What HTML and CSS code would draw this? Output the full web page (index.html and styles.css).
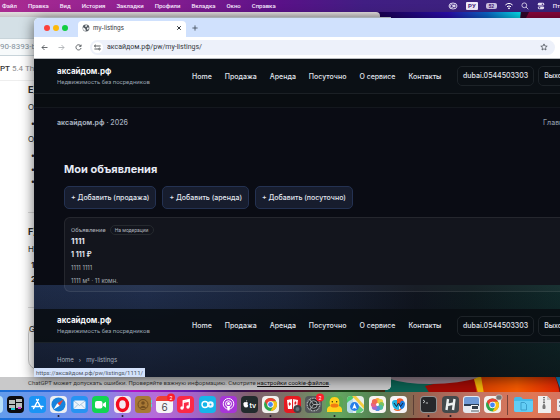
FILE: index.html
```html
<!DOCTYPE html>
<html lang="ru">
<head>
<meta charset="utf-8">
<title>my-listings</title>
<link rel="stylesheet" href="styles.css">
</head>
<body>
<div class="desktop">
  <svg class="wallpaper" viewBox="0 0 560 420" preserveAspectRatio="none" aria-hidden="true">
    <defs>
      <linearGradient id="sky"><stop offset=".66" stop-color="#180048"/><stop offset=".8" stop-color="#2a0cae"/><stop offset=".87" stop-color="#0a66c8"/><stop offset=".93" stop-color="#04e4f0"/></linearGradient>
      <linearGradient id="floor"><stop offset="0" stop-color="#1a70d8"/><stop offset=".17" stop-color="#3a62dc"/><stop offset=".24" stop-color="#b812c8"/><stop offset=".35" stop-color="#5c18b0"/><stop offset=".42" stop-color="#30104e"/><stop offset=".52" stop-color="#5c0c30"/><stop offset=".62" stop-color="#174618"/><stop offset=".74" stop-color="#58140e"/><stop offset=".86" stop-color="#a81408"/><stop offset="1" stop-color="#641812"/></linearGradient>
      <linearGradient id="fire"><stop offset="0" stop-color="#d43c00"/><stop offset=".5" stop-color="#f65a00"/><stop offset="1" stop-color="#e02404"/></linearGradient>
    </defs>
    <rect width="560" height="210" fill="url(#sky)"/>
    <path d="M522 0H560V40H518Z" fill="#30052c"/><path d="M535 0H560V22H524Z" fill="#88063c"/>
    <rect y="210" width="560" height="210" fill="url(#floor)"/>
    <path d="M385 370H490L470 400H385Z" fill="#0b6253"/>
    <path d="M425 386Q460 378 482 376L478 410H440Z" fill="#a20b05"/>
    <path d="M390 360H508Q490 383 430 384Q405 384 390 379Z" fill="#96838f"/>
    <path d="M474 379L508 370H552Q560 385 560 400H478Z" fill="url(#fire)"/>
    <path d="M474 379L481 376L485 400H480Z" fill="#efb508"/>
    <path d="M553 370H560V388Z" fill="#0b86c2"/>
  </svg>

  <nav class="menubar" aria-label="Меню">
    <div class="menus"><span>Файл</span><span>Правка</span><span>Вид</span><span>История</span><span>Закладки</span><span>Профили</span><span>Вкладка</span><span>Окно</span><span>Справка</span></div>
    <div class="status">
      <svg width="10" height="8" viewBox="0 0 10 8"><ellipse cx="5" cy="4" rx="4" ry="3" fill="none" stroke="#ddd6ef"/><circle cx="3.6" cy="4.2" r="1.5" fill="none" stroke="#ddd6ef"/><circle cx="6.2" cy="4" r="1.4" fill="#ddd6ef"/></svg>
      <span class="lang">РУ</span>
      <span class="battery">52</span>
      <svg width="8" height="8" viewBox="0 0 8 8" fill="none" stroke="#fff"><path d="M.4 3Q4-.2 7.6 3M2 4.7Q4 3.2 6 4.7"/><circle cx="4" cy="6.3" r=".5" fill="#fff"/></svg>
      <svg width="8" height="8" viewBox="0 0 8 8" fill="none" stroke="#e8e2f4" stroke-width=".8"><circle cx="3.3" cy="3.3" r="2.4"/><path d="M5 5L7.3 7.3"/></svg>
      <svg width="8" height="8" viewBox="0 0 8 8" fill="#e8e2f4"><rect x=".8" y=".8" width="6.4" height="2.8" rx="1.4"/><rect x=".8" y="4.4" width="6.4" height="2.8" rx="1.4"/><circle cx="5.5" cy="2.2" r=".8" fill="#412681"/><circle cx="2.5" cy="5.8" r=".8" fill="#412681"/></svg>
      <span>Пт</span>
    </div>
  </nav>

  <div class="strip"></div>
  <section class="chat">
    <div class="chat-tabs"></div>
    <div class="chat-url">90-8393-b1</div>
    <div class="chat-model"><b>PT</b>&nbsp;5.4 Thi</div>
    <div class="chat-body">
      <h2>Е)</h2><p>От</p><p class="dot">•</p><p>Од</p><p class="dot">•</p><p class="dot tight">•</p><p class="dot tight">•</p>
      <hr>
      <h2>F)</h2><p>Ну</p><p class="num">1.</p><p class="num tight">2.</p>
      <hr class="second">
      <div class="composer">G</div>
    </div>
    <p class="notice">ChatGPT может допускать ошибки. Проверяйте важную информацию. Смотрите <a href="#cookies">настройки cookie-файлов</a>.</p>
  </section>

  <main class="browser">
    <div class="tabstrip">
      <div class="lights"><i class="red"></i><i class="yellow"></i><i class="green"></i></div>
      <div class="tab">
        <svg width="8" height="8" viewBox="0 0 8 8"><circle cx="4" cy="4" r="3.4" fill="#555c63"/><path d="M1.2 3.2L3 4.4L4 6.6L2.8 7L1 5.2ZM3.6 1L5.4 1.4L4.6 2.8L3.2 3ZM5.4 3.6L7 3.7L6 6L4.9 5Z" fill="#fff"/></svg>
        <span>my-listings</span>
        <button class="plain" aria-label="Закрыть"><svg width="6" height="6" viewBox="0 0 6 6"><path d="M1.2 1.2L4.8 4.8M4.8 1.2L1.2 4.8" stroke="#30353a"/></svg></button>
      </div>
      <button class="plain" aria-label="Новая вкладка"><svg width="6" height="6" viewBox="0 0 6 6"><path d="M3 .4V5.6M.4 3H5.6" stroke="#3b4450" stroke-width=".8"/></svg></button>
    </div>
    <div class="toolbar">
      <button class="plain" aria-label="Назад"><svg width="7" height="7" viewBox="0 0 7 7" fill="none" stroke="#41464b" stroke-width=".8"><path d="M6.5 3.5H1M3.5 1L1 3.5L3.5 6"/></svg></button>
      <button class="plain" aria-label="Вперёд"><svg width="7" height="7" viewBox="0 0 7 7" fill="none" stroke="#a5a8ac" stroke-width=".8"><path d="M.5 3.5H6M3.5 1L6 3.5L3.5 6"/></svg></button>
      <button class="plain" aria-label="Обновить"><svg width="7" height="7" viewBox="0 0 7 7" fill="none" stroke="#41464b" stroke-width=".8"><path d="M5.8 2A2.6 2.6 0 1 0 6.1 4M6.1.6V2.4H4.2"/></svg></button>
      <div class="omnibox">
        <span class="site"><svg width="7" height="7" viewBox="0 0 7 7" fill="none" stroke="#34383d" stroke-width=".8"><path d="M3 2H6.6M.4 5H4"/><circle cx="1.4" cy="2" r=".9"/><circle cx="5.4" cy="5" r=".9"/></svg></span>
        <input aria-label="Адрес" value="аксайдом.рф/pw/my-listings/">
        <button class="plain" aria-label="В закладки"><svg width="8" height="8" viewBox="0 0 8 8" fill="none" stroke="#3e444a" stroke-width=".7"><path d="M4 .9L4.9 3L7.2 3.2L5.5 4.7L6 7L4 5.8L2 7L2.5 4.7L.8 3.2L3.1 3Z"/></svg></button>
      </div>
    </div>

    <div class="page">
      <header class="site-header">
        <div class="brand"><strong>аксайдом.рф</strong><small>Недвижимость без посредников</small></div>
        <nav><a href="#h">Home</a><a href="#s">Продажа</a><a href="#r">Аренда</a><a href="#d">Посуточно</a><a href="#a">О сервисе</a><a href="#c">Контакты</a></nav>
        <div class="account"><a href="#u">dubai.0544503303</a><a href="#x">Выход</a></div>
      </header>
      <div class="gap-band"></div>
      <div class="legal"><span><b>аксайдом.рф</b> · 2026</span><a href="#m">Главная</a></div>
      <section class="listings">
        <h1>Мои объявления</h1>
        <div class="actions"><button>+ Добавить (продажа)</button><button>+ Добавить (аренда)</button><button>+ Добавить (посуточно)</button></div>
        <article class="card">
          <div class="kind">Объявление <span>На модерации</span></div>
          <h2>1111</h2>
          <strong>1 111 ₽</strong>
          <p>1111 1111</p>
          <p>1111 м² · 11 комн.</p>
        </article>
      </section>
      <header class="site-header lower">
        <div class="brand"><strong>аксайдом.рф</strong><small>Недвижимость без посредников</small></div>
        <nav><a href="#h">Home</a><a href="#s">Продажа</a><a href="#r">Аренда</a><a href="#d">Посуточно</a><a href="#a">О сервисе</a><a href="#c">Контакты</a></nav>
        <div class="account"><a href="#u">dubai.0544503303</a><a href="#x">Выход</a></div>
      </header>
      <div class="crumbs"><a href="#h">Home</a><span>›</span><a href="#l">my-listings</a></div>
      <div class="link-hint">https://аксайдом.рф/pw/listings/1111/</div>
    </div>
  </main>

  <div class="dock">
    <svg viewBox="0 0 17 17"><rect width="17" height="17" rx="4" fill="#b8e0fa"/></svg>
    <svg viewBox="0 0 17 17"><rect width="17" height="17" rx="4" fill="#0d0d10"/><path d="M2 4H8V8H2ZM9 3H15V6H9ZM2 9H8V12H2ZM9 7H15V12H9Z" fill="#b9bfbd"/><path d="M4 12H8V14H4Z" fill="#18c9d8"/><path d="M11 11H14V13H11Z" fill="#cf38c7"/></svg>
    <svg viewBox="0 0 17 17"><rect width="17" height="17" rx="4" fill="#1a94f5"/><path d="M9.4 3.5L4.6 12.5M7.6 3.5L12.4 12.5M3 10.5H10M12 10.5H14" stroke="#fff" stroke-width="1.5" stroke-linecap="round"/></svg>
    <svg viewBox="0 0 17 17"><rect width="17" height="17" rx="4" fill="#eceff2"/><circle cx="8.5" cy="8.5" r="7" fill="#1683dd"/><path d="M13.5 3.5L9.7 9.7L7.3 7.3Z" fill="#f04438"/><path d="M3.5 13.5L7.3 7.3L9.7 9.7Z" fill="#fff"/><circle class="run" cx="8.5" cy="20" r="1"/></svg>
    <svg viewBox="0 0 17 17"><rect width="17" height="17" rx="4" fill="#2793f2"/><rect x="2.5" y="4.5" width="12" height="8.5" rx="1.5" fill="#edf4fa"/><path d="M3 5L8.5 9.5L14 5M3 12.5L7 8.5M14 12.5L10 8.5" fill="none" stroke="#93b7d4" stroke-width=".8"/></svg>
    <svg viewBox="0 0 17 17"><rect width="17" height="17" rx="4" fill="#12d552"/><rect x="3" y="5" width="7.5" height="7.5" rx="2" fill="#fff"/><path d="M11 7.8L14 5.8V11.7L11 9.8Z" fill="#fff"/></svg>
    <svg viewBox="0 0 17 17"><rect width="17" height="17" rx="4" fill="#f3eaf1"/><ellipse cx="8.5" cy="8.5" rx="5" ry="6" fill="none" stroke="#f40b1d" stroke-width="3.4"/><circle class="run" cx="8.5" cy="20" r="1"/></svg>
    <svg viewBox="0 0 17 17"><path d="M16 4H17V7H16ZM16 8H17V11H16Z" fill="#5cd4d0"/><rect width="16" height="17" rx="3.5" fill="#a87935"/><circle cx="8" cy="8.5" r="5" fill="none" stroke="#744f20"/><circle cx="8" cy="7" r="1.8" fill="#744f20"/><path d="M4.8 12Q8 7.5 11.2 12Z" fill="#744f20"/></svg>
    <svg viewBox="0 0 17 17"><rect width="17" height="17" rx="4" fill="#f6f4f6"/><path d="M0 5V4Q0 0 4 0H13Q17 0 17 4V5Z" fill="#ed4035"/><text x="8.5" y="14.5" class="day">6</text><circle cx="15" cy="1.5" r="4" fill="#fb1f2b"/><text x="15" y="3.5" class="badge">2</text></svg>
    <svg viewBox="0 0 17 17"><rect width="17" height="17" rx="4" fill="#fb2946"/><path d="M6.2 12V4.8L12.3 3.5V10.8M6.2 6.4L12.3 5" fill="none" stroke="#fff" stroke-width="1.3"/><circle cx="5" cy="12" r="1.7" fill="#fff"/><circle cx="11" cy="11" r="1.7" fill="#fff"/></svg>
    <svg viewBox="0 0 17 17"><rect width="17" height="17" rx="4" fill="#16b5e9"/><circle cx="6" cy="8.5" r="3" fill="none" stroke="#fff" stroke-width="1.4"/><circle cx="11.5" cy="8.5" r="3.2" fill="#eefaff"/><circle cx="11.5" cy="8.5" r="1" fill="#16b5e9"/></svg>
    <svg viewBox="0 0 17 17"><rect width="17" height="17" rx="4" fill="#a735d8"/><g fill="none" stroke="#fff"><circle cx="8.5" cy="7.8" r="5.3"/><circle cx="8.5" cy="7.8" r="3"/></g><circle cx="8.5" cy="7.5" r="1.5" fill="#fff"/><path d="M7 10H10L9.4 14.5H7.6Z" fill="#fff"/></svg>
    <svg viewBox="0 0 17 17"><rect width="17" height="17" rx="4" fill="#222b2d"/><path d="M5 6.2Q3 5.4 2.3 7.5Q2.2 10.2 4 11.5L5 11.2L6 11.5Q7 10.8 7.2 9.5Q5.8 8.5 7 6.8Q6 5.8 5 6.2M5 5.8Q5 4.4 6.2 4Q6.3 5.3 5 5.8" fill="#fff"/><text x="11.8" y="11.5" class="tv">tv</text></svg>
    <svg viewBox="0 0 17 17"><rect width="17" height="17" rx="4" fill="#f3f1ef"/><circle cx="8.5" cy="8.5" r="6.5" fill="#2fa64b"/><path d="M2.9 5.2A6.5 6.5 0 0 1 14.1 5.2H8.5L5.7 10.1Z" fill="#ea4335"/><path d="M14.1 5.2A6.5 6.5 0 0 1 8.5 15L11.4 10.1L8.5 5.2Z" fill="#fbc116"/><circle cx="8.5" cy="8.5" r="3.2" fill="#fff"/><circle cx="8.5" cy="8.5" r="2.4" fill="#4285f4"/><circle class="run" cx="8.5" cy="20" r="1"/></svg>
    <svg viewBox="0 0 17 17"><rect width="17" height="17" rx="4" fill="#e61b22"/><path d="M3 4L8 3V13H4Z" fill="#fff"/><path d="M9 3L14 4L13 12L9 13Z" fill="#fbeaea"/><path d="M5.5 6L7 8L5.5 10L4.5 8ZM11.5 5L12.5 7L11 9L10.3 7Z" fill="#d81c22"/><circle cx="13.5" cy="13" r="4" fill="#3e4448"/><circle cx="13.5" cy="13" r="2" fill="#66727a"/></svg>
    <svg viewBox="0 0 17 17"><rect width="17" height="17" rx="4" fill="#54585a"/><circle cx="8.5" cy="8.5" r="6.3" fill="#2b2e30" stroke="#a9adaf" stroke-width="1.5" stroke-dasharray="1 .6"/><circle cx="8.5" cy="8.5" r="3.8" fill="none" stroke="#a9adaf"/><path d="M8.5 8.5L5 3.5M8.5 8.5L5 13.5M8.5 8.5H14" stroke="#a9adaf"/><circle cx="15" cy="1.5" r="4" fill="#fb1f2b"/><text x="15" y="3.5" class="badge">2</text></svg>
    <svg viewBox="0 0 17 17"><rect width="17" height="17" rx="4" fill="#59a653"/><path d="M1 16V13Q1.5 10.5 4 10Q2 1 8.5 1Q15 1 13 10Q15.5 10.5 16 13V16Z" fill="#ffd21c"/><ellipse cx="8.5" cy="9.5" rx="4" ry="2" fill="#f27b12"/><circle cx="6.3" cy="5.7" r=".7" fill="#2e2810"/><circle cx="10.7" cy="5.7" r=".7" fill="#2e2810"/><circle class="run" cx="8.5" cy="20" r="1"/></svg>
    <svg viewBox="0 0 17 17"><rect width="17" height="17" rx="4" fill="#e8eeea"/><path d="M0 4Q0 0 4 0H8L0 9Z" fill="#4cc96b"/><path d="M9 0L17 9V13L5 0Z" fill="#f6cd40"/><path d="M10 8L17 14L13 17H9Z" fill="#62cd7a"/><path d="M2 5L6 3V17H3Q0 16 0 13V7Z" fill="#b5dbea"/><circle cx="7.5" cy="10.5" r="4.4" fill="#277ee8"/><path d="M7.5 7.3L9.8 13L7.5 12L5.2 13Z" fill="#fff"/></svg>
    <svg viewBox="0 0 17 17"><rect width="17" height="17" rx="4" fill="#f7f4f2"/><g opacity=".9"><circle cx="8.5" cy="4.5" r="2.6" fill="#f8a226"/><circle cx="11.5" cy="5.7" r="2.6" fill="#e6cf36"/><circle cx="12.5" cy="8.5" r="2.6" fill="#70bd4d"/><circle cx="11.5" cy="11.3" r="2.6" fill="#3eb995"/><circle cx="8.5" cy="12.5" r="2.6" fill="#4283dd"/><circle cx="5.5" cy="11.3" r="2.6" fill="#9c5bcb"/><circle cx="4.5" cy="8.5" r="2.6" fill="#e6547f"/><circle cx="5.5" cy="5.7" r="2.6" fill="#f05c42"/></g><circle cx="8.5" cy="8.5" r="1" fill="#fff"/></svg>
    <svg viewBox="0 0 17 17"><rect width="17" height="17" rx="4" fill="#f5f4f7"/><path d="M2 7Q2 4 5 4H9V14Q3 14.5 2 7Z" fill="#21b0e0"/><path d="M7 3Q11 1 13.5 4L12 8H7Z" fill="#f0572c"/><path d="M11 5Q14.5 4 15 8Q14.5 12.5 11 13.5L9 9Z" fill="#1a79dc"/><path d="M4 7L6.5 10.5L8.5 7L10.5 10.5L13 7" fill="none" stroke="#14233c"/><path d="M4 13Q8 16 11 13" fill="none" stroke="#f0632a" stroke-width="1.2"/></svg>
    <i class="sep"></i>
    <svg viewBox="0 0 17 17"><rect width="17" height="17" rx="4" fill="#909393"/><rect x="1" y="1" width="15" height="15" rx="3" fill="#25282b"/><path d="M3 4L5 5.5L3 7M5.8 7H8" fill="none" stroke="#e3e8e8" stroke-width=".8"/><circle class="run" cx="8.5" cy="20" r="1"/></svg>
    <svg viewBox="0 0 17 17"><rect width="17" height="17" rx="4" fill="#43494b"/><path d="M6 3L4.5 14M12.5 3L11 14M5 9L12 7.5" stroke="#edf0ef" stroke-width="2.4"/><circle class="run" cx="8.5" cy="20" r="1"/></svg>
    <svg viewBox="0 0 17 17"><rect width="17" height="17" rx="3" fill="#e4e9f0"/><path d="M1 3Q1 1 3 1H14Q16 1 16 3V8H1Z" fill="#6f9ad6"/><path d="M1 8H16V10H1Z" fill="#2a3d55"/><path d="M8 9H15L17 16H7Z" fill="#f3f3f3"/><rect x="9" y="10" width="6" height="3" fill="#35404c"/><path d="M8 15H16" stroke="#4d5964"/></svg>
    <svg viewBox="0 0 17 17"><rect width="17" height="17" rx="4" fill="#f3f1ef"/><circle cx="8.5" cy="9" r="6.5" fill="#2fa64b"/><path d="M2.9 5.7A6.5 6.5 0 0 1 14.1 5.7H8.5L5.7 10.6Z" fill="#ea4335"/><path d="M14.1 5.7A6.5 6.5 0 0 1 8.5 15.5L11.4 10.6L8.5 5.7Z" fill="#fbc116"/><circle cx="8.5" cy="9" r="3.2" fill="#fff"/><circle cx="8.5" cy="9" r="2.4" fill="#4285f4"/><rect x="12" y="-1" width="6" height="5" rx="2" fill="#737573" stroke="#d0cdca" stroke-width=".7"/></svg>
    <i class="sep"></i>
    <svg viewBox="0 0 17 17"><path d="M-1 3Q-1 1 1 1H6L8 3H17Q18 3 18 5V14Q18 16 16 16H1Q-1 16-1 14Z" fill="#43b9e9"/><path d="M-1 5H18V14Q18 16 16 16H1Q-1 16-1 14Z" fill="#62cdf5"/><path d="M6 6.5H9.5L11.5 8.5V14H6Z" fill="none" stroke="#3b9fcc"/></svg>
    <svg viewBox="0 0 17 17"><path d="M2 0H11L15 4V17H2Z" fill="#efefef"/><path d="M11 0V4H15Z" fill="#c6c6c6"/><path d="M8 1V10" stroke="#737373" stroke-width="2" stroke-dasharray="1 .7"/><rect x="6.5" y="9" width="3" height="4" rx="1" fill="#777"/></svg>
    <svg viewBox="0 0 17 17"><rect y="3" width="17" height="12" rx="1" fill="#ebeaec"/><path d="M2 6H6M2 10H6" stroke="#87909b" stroke-width="2"/></svg>
  </div>
</div>
</body>
</html>
```

FILE: styles.css
```css
* { box-sizing: border-box; }
body { margin: 0; overflow: hidden; font-family: Inter, "Liberation Sans", sans-serif; }
h1, h2, p { margin: 0; }
a { color: inherit; text-decoration: none; }
button, input { font: inherit; color: inherit; }
.plain { display: flex; padding: 0; border: 0; background: none; }
.desktop { position: relative; height: 100vh; overflow: hidden; }
.wallpaper { position: absolute; width: 100%; height: 100%; }

.menubar { position: relative; display: flex; justify-content: space-between; align-items: center; height: 12px; padding: 0 0 1px 2px; overflow: hidden; color: #f8eaff; font-family: Roboto, sans-serif; font-size: 6px; font-weight: 500; white-space: nowrap; background: linear-gradient(90deg, #aa2b91, #8e2092 25%, #5a1188 50%, #411e83 65%, #37257b); }
.menus { display: flex; gap: 11px; }
.status { display: flex; align-items: center; gap: 8px; }
.lang { padding: 0 2px; border-radius: 1px; color: #432078; background: #f0eaf8; font-weight: 700; line-height: 8px; }
.battery { width: 11px; border-radius: 2px; color: #432078; background: #c9bfdf; font-size: 5px; line-height: 6px; text-align: center; font-weight: 700; }

.strip { position: absolute; top: 12px; left: 0; width: 380px; height: 20px; border-radius: 0 4px 0 0; background: linear-gradient(#e2dede, #c3c0c3 6px); }
.chat { position: absolute; top: 17px; left: 0; width: 391px; bottom: 30px; display: flex; flex-direction: column; overflow: hidden; border-radius: 0 0 5px 0; background: #fff; color: #282828; font-size: 8px; }
.chat-tabs { height: 21px; flex: none; background: #d4e0e6; }
.chat-url { height: 18px; flex: none; border: solid #c8d4da; border-width: 1px 0; font-family: Roboto, sans-serif; line-height: 16px; color: #82909a; background: #f7fafb; }
.chat-model { height: 25px; flex: none; padding-top: 4px; border-bottom: 1px solid #eee; font-family: Roboto, sans-serif; line-height: 17px; color: #8b8b8b; }
.chat-model b { color: #333; font-weight: 500; }
.chat-body { flex: 1; padding-left: 28px; line-height: 16px; }
.chat-body h2 { height: 18px; font-size: 9px; line-height: 18px; }
.chat-body .dot, .chat-body .num { padding-left: 3px; font-weight: 700; }
.chat-body .tight { line-height: 12px; }
.chat-body hr { width: 30px; margin: 25px 0 10px; border: 0; border-top: 1px solid #ddd; }
.chat-body .second { margin: 22px 0 16px; }
.composer { height: 46px; border: 1px solid #ccc; border-radius: 10px; line-height: 8px; }
.notice { height: 13px; flex: none; padding-left: 28px; background: #c9c9ca; font-family: Roboto, sans-serif; font-size: 6px; line-height: 12px; color: #3c3c3c; white-space: nowrap; }
.notice a { text-decoration: underline; color: #111; }

.browser { position: absolute; top: 18px; left: 34px; right: -36px; bottom: 43px; display: flex; flex-direction: column; overflow: hidden; border-radius: 5px 0 0 0; box-shadow: 0 2px 14px rgb(0 0 0 / 60%); background: #fff; }
.tabstrip { display: flex; align-items: center; height: 19px; flex: none; padding-left: 10px; background: #d0e1fd; }
.lights { display: flex; gap: 3px; width: 34px; }
.lights i { width: 6px; height: 6px; border-radius: 50%; }
.red { background: #fc413d; }
.yellow { background: #fcb90c; }
.green { background: #11cd42; }
.tab { display: flex; align-items: center; gap: 3px; width: 108px; height: 16px; margin: 3px 6px 0 0; padding: 0 4px 3px; border-radius: 4px 4px 0 0; background: #fff; font-size: 6px; color: #292d32; }
.tab span { flex: 1; }
.toolbar { display: flex; align-items: center; gap: 10px; height: 22px; flex: none; padding: 0 41px 1px 7px; border-bottom: 1px solid #b9bcc0; }
.omnibox { display: flex; flex: 1; align-items: center; gap: 4px; height: 15px; margin-left: -2px; padding: 0 7px 0 2px; border-radius: 8px; background: #edf1fa; }
.site { display: grid; place-items: center; width: 11px; height: 11px; border-radius: 50%; background: #fff; }
.omnibox input { flex: 1; min-width: 0; padding: 0; border: 0; outline: 0; background: none; color: #34383d; font-family: Roboto, sans-serif; font-size: 7px; }

.page { position: relative; flex: 1; min-height: 0; overflow: hidden; color: #e2e6ee; white-space: nowrap; background: linear-gradient(transparent, rgb(8 10 16 / 50%)) bottom / 100% 92px no-repeat, linear-gradient(90deg, #1e2b47, #202e4c 20%, #1a253b 45%, #10151f 68%, #0e1b1f 78%, #102b2b 95%) bottom / 100% 92px no-repeat, #0a0c14; }
.site-header { display: flex; align-items: center; height: 35px; padding-left: 23px; border-bottom: 1px solid #1b2025; background: #0b1015; }
.brand { display: flex; flex-direction: column; width: 135px; }
.brand strong { font-size: 8px; line-height: 11px; color: #f6f8fc; }
.brand small { font-family: Roboto, sans-serif; font-size: 6px; line-height: 10px; color: #99a3b0; }
.site-header nav { display: flex; gap: 13px; width: 265px; font-size: 7px; font-weight: 500; }
.account { display: flex; gap: 4px; font-size: 7px; font-weight: 500; }
.account a { padding: 0 5px; border: 1px solid #1d2328; border-radius: 5px; line-height: 18px; }
.gap-band { height: 14px; border-bottom: 1px solid #14181e; background: #090d11; }
.legal { display: flex; justify-content: space-between; padding: 10px 20px 0 23px; color: #a4aebd; font-size: 7px; font-weight: 500; line-height: 10px; }
.legal b { font-weight: 700; }
.legal a { width: 33px; color: #8994a2; }
.listings { padding: 32px 0 17px 30px; }
.listings h1 { font-size: 11px; line-height: 18px; color: #e6eaf5; }
.actions { display: flex; gap: 6px; margin-top: 8px; }
.actions button { height: 23px; padding: 0 6px; border: 1px solid #243252; border-radius: 5px; background: #171d2e; font-size: 7px; font-weight: 500; }
.card { margin-top: 8px; padding: 7px 6px 4px; border: 1px solid rgb(255 255 255 / 8%); border-radius: 6px; background: rgb(255 255 255 / 4%); font-size: 6px; }
.kind { display: flex; align-items: center; gap: 4px; height: 9px; font-family: Roboto, sans-serif; line-height: 9px; color: #b0b6bd; }
.kind span { padding: 0 4px; border: 1px solid #25292e; border-radius: 5px; font-size: 5px; line-height: 8px; }
.card h2 { font-size: 8px; line-height: 14px; }
.card strong { display: block; font-size: 7px; line-height: 13px; }
.card p { color: #a8aeb5; line-height: 13px; }
.lower { height: 34px; background: rgb(9 14 18 / 88%); border-color: #1b2229; }
.crumbs { display: flex; gap: 5px; padding: 12px 23px; font-size: 6px; line-height: 10px; color: #a5afbe; }
.link-hint { position: absolute; left: 0; bottom: 0; padding: 0 2px; background: #d4e2fb; color: #4f5866; font-family: Roboto, sans-serif; font-size: 6px; line-height: 9px; }

.dock { position: absolute; left: -14px; right: -14px; bottom: 2px; display: flex; justify-content: space-between; align-items: center; height: 26px; padding-bottom: 1px; background: linear-gradient(90deg, #609eec, #7391eb 15%, #b76bd8 29%, #a264c5 36%, #80616d 45%, #7b7367 52%, #63a661 60%, #527c50 67%, #976150 74%, #c17365 83%, #e07755 93%, #cf7367); }
.dock svg { width: 17px; height: 17px; flex: none; overflow: visible; }
.run { fill: #1e1a25; }
.sep { width: 5px; height: 20px; border-left: 1px solid rgb(60 35 35 / 60%); margin-right: -2px; margin-left: 2px; }
.day { font-size: 10px; text-anchor: middle; fill: #4b4950; }
.badge { font-size: 5px; text-anchor: middle; fill: #fff; }
.tv { font-size: 7px; font-weight: 600; text-anchor: middle; fill: #fff; }
```
